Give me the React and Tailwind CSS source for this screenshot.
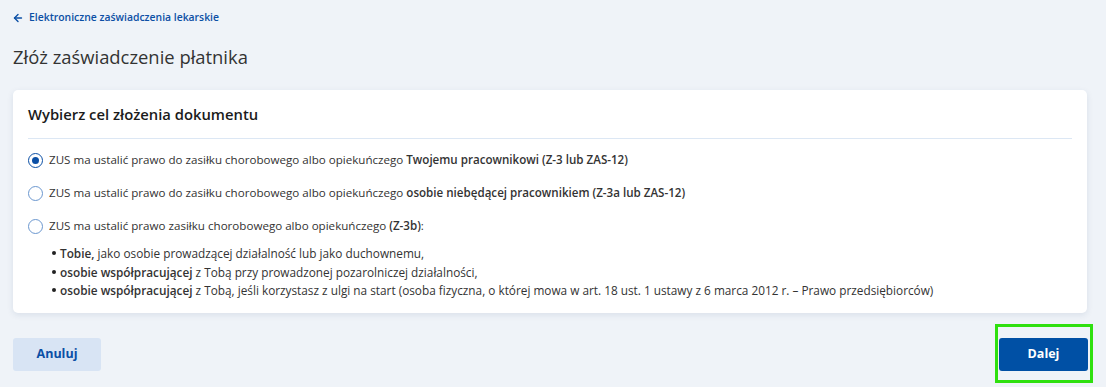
import { ArrowLeft } from 'lucide-react'

const Radio = ({ checked }) => (
    <span
        className={`flex items-center justify-center w-[15px] h-[15px] rounded-full border-[1.5px] shrink-0 bg-white ${checked ? 'border-[#0b4fa5]' : 'border-[#6b97cf]'}`}
    >
        {checked && <span className="w-[7px] h-[7px] rounded-full bg-[#0b4fa5]" />}
    </span>
)

const Option = ({ checked, children }) => (
    <label className="flex items-center gap-[6px] h-[20px] text-[11.6px] text-[#333333]">
        <Radio checked={checked} />
        <span>{children}</span>
    </label>
)

export default function App() {
    return (
        <div className="w-full min-h-[387px] bg-[#eff3f8] pl-[13px] pr-[19px] pt-[10px] font-['Open_Sans',sans-serif]">
            {/* Back link */}
            <a className="flex items-center gap-[5px] h-[16px] text-[10.4px] font-semibold text-[#0b4fa5]">
                <ArrowLeft size={12} strokeWidth={2.75} className="-ml-[1px]" />
                <span>Elektroniczne zaświadczenia lekarskie</span>
            </a>

            <h1 className="mt-[19px] h-[24px] leading-[24px] text-[18.4px] text-[#333333]">
                Złóż zaświadczenie płatnika
            </h1>

            {/* Card */}
            <div className="mt-[21px] bg-white rounded-[5px] shadow-[0_2px_6px_rgba(30,60,110,0.10)] pt-[14px] px-[15px] pb-[13px]">
                <h2 className="h-[20px] leading-[20px] text-[14.8px] font-semibold text-[#1b1b1b]">
                    Wybierz cel złożenia dokumentu
                </h2>
                <div className="mt-[14px] border-t border-[#dce7f4]" />

                <div className="mt-[11px] flex flex-col gap-[13px]">
                    <Option checked>
                        ZUS ma ustalić prawo do zasiłku chorobowego albo opiekuńczego{' '}
                        <span className="font-semibold">Twojemu pracownikowi (Z-3 lub ZAS-12)</span>
                    </Option>
                    <Option>
                        ZUS ma ustalić prawo do zasiłku chorobowego albo opiekuńczego{' '}
                        <span className="font-semibold">osobie niebędącej pracownikiem (Z-3a lub ZAS-12)</span>
                    </Option>
                    <Option>
                        ZUS ma ustalić prawo zasiłku chorobowego albo opiekuńczego{' '}
                        <span className="font-semibold">(Z-3b)</span>:
                    </Option>
                </div>

                <ul className="mt-[8px] pl-[24px] text-[11.8px] leading-[18.5px] text-[#333333]">
                    <li className="flex items-center gap-[3px]">
                        <span className="w-[4px] h-[4px] rounded-full bg-[#222222] mr-[1px]" />
                        <span><span className="font-semibold">Tobie,</span> jako osobie prowadzącej działalność lub jako duchownemu,</span>
                    </li>
                    <li className="flex items-center gap-[3px]">
                        <span className="w-[4px] h-[4px] rounded-full bg-[#222222] mr-[1px]" />
                        <span><span className="font-semibold">osobie współpracującej</span> z Tobą przy prowadzonej pozarolniczej działalności,</span>
                    </li>
                    <li className="flex items-center gap-[3px]">
                        <span className="w-[4px] h-[4px] rounded-full bg-[#222222] mr-[1px]" />
                        <span><span className="font-semibold">osobie współpracującej</span> z Tobą, jeśli korzystasz z ulgi na start (osoba fizyczna, o której mowa w art. 18 ust. 1 ustawy z 6 marca 2012 r. – Prawo przedsiębiorców)</span>
                    </li>
                </ul>
            </div>

            {/* Actions */}
            <div className="flex items-start justify-between">
                <button className="mt-[25px] w-[88px] h-[33px] rounded-[3px] bg-[#d8e4f4] text-[12.5px] font-bold text-[#0b4fa5]">
                    Anuluj
                </button>
                <div className="mt-[11px] -mr-[6px] border-[3px] border-[#2fe00f] pt-[11px] pb-[9px] pl-[1px] pr-[2px]">
                    <button className="block w-[89px] h-[33px] rounded-[3px] bg-[#0050a5] text-[12.5px] font-bold text-white">
                        Dalej
                    </button>
                </div>
            </div>
        </div>
    )
}
